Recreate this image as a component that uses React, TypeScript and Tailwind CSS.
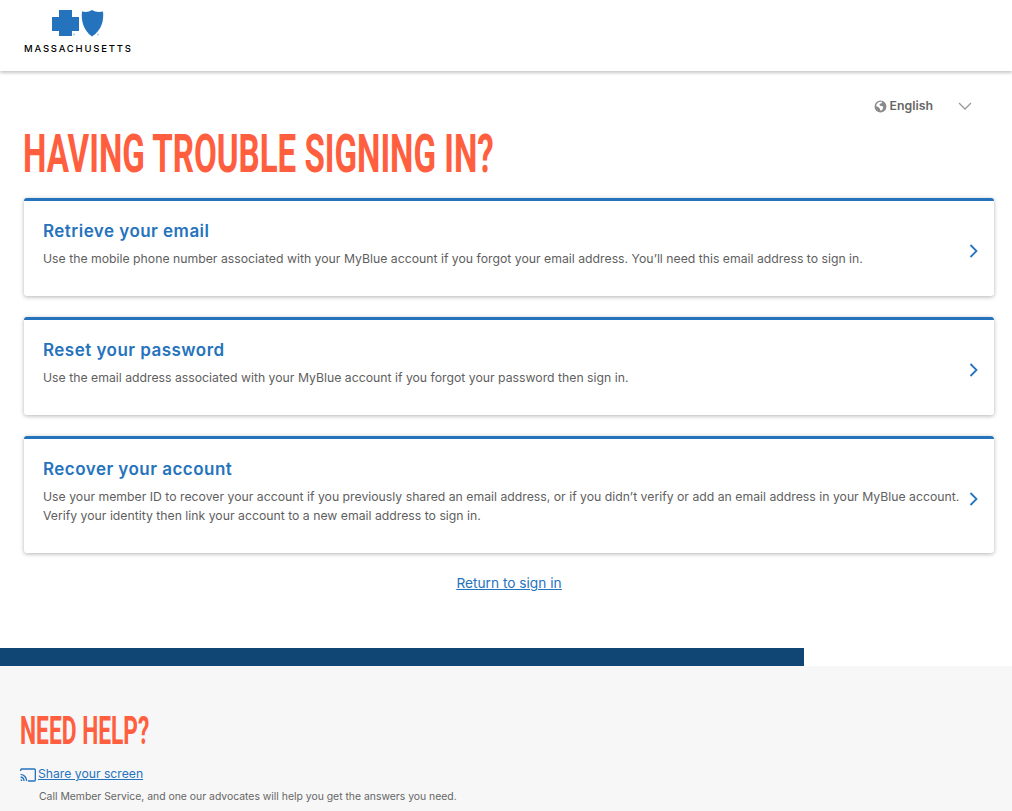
import React from "react";

const cards = [
  { t: "Retrieve your email", d: ["Use the mobile phone number associated with your MyBlue account if you forgot your email address. You’ll need this email address to sign in."], h: "h-[98px]" },
  { t: "Reset your password", d: ["Use the email address associated with your MyBlue account if you forgot your password then sign in."], h: "h-[98px]" },
  { t: "Recover your account", d: ["Use your member ID to recover your account if you previously shared an email address, or if you didn’t verify or add an email address in your MyBlue account.", "Verify your identity then link your account to a new email address to sign in."], h: "h-[117px]" },
];

function Logo() {
  return (
    <svg width="52" height="27" viewBox="0 0 52 27" className="block">
      <path d="M7 0H20V7H27V21H20V26H7V21H0V7H7Z" fill="#2673bd" />
      <circle cx="22" cy="24.500" r="1" fill="#a9c8e6" />
      <path d="M30 1.500C34 2.500 37 2 40 0C43 2 47 2.500 51 1.500C52 10 50 20 40 26.500C31 20 29 10 30 1.500Z" fill="#2673bd" />
      <circle cx="46" cy="24.500" r="1" fill="#a9c8e6" />
    </svg>
  );
}

export default function App() {
  return (
    <div className="h-[811px] overflow-hidden bg-white font-['Inter',sans-serif]">
      <header className="h-[71px] bg-white pl-6 pt-[10px] shadow-[0_2px_3px_rgba(0,0,0,0.22)]">
        <div className="ml-[28px]"><Logo /></div>
        <div className="mt-[6px] text-[9.5px] leading-[11px] font-medium tracking-[1.78px] text-black">MASSACHUSETTS</div>
      </header>

      <div className="flex h-[46px] items-center justify-end pr-[40px] pt-[24px] text-[#666]">
        <svg width="13" height="13" viewBox="0 0 24 24" className="mr-[3px]" fill="#8a8a8a">
          <path d="M12 1a11 11 0 1 0 0 22 11 11 0 0 0 0-22Zm0 2c1 0 2 .2 3 .6L14 6l-3 1-1 2 2 2 3 0 2 2-1 4-3 3h-1l-1-4-3-3-3-1-1-2c.6-3.600 4-7 8-7Z" />
        </svg>
        <span className="text-[12.3px] font-semibold">English</span>
        <svg width="14" height="8" viewBox="0 0 14 8" className="ml-[25px]" fill="none" stroke="#999" strokeWidth="1.3">
          <path d="M1 1l6 6 6-6" />
        </svg>
      </div>

      <h1 className="mt-[11px] ml-[23px] h-[52px] origin-left scale-x-[0.613] whitespace-nowrap font-['Roboto',sans-serif] text-[54px] leading-[52px] font-bold text-[#ff5f3f] uppercase">
        Having trouble signing in?
      </h1>

      <main className="mt-[18px] ml-[24px] flex w-[970px] flex-col gap-[21px]">
        {cards.map((c) => (
          <div key={c.t} className={`${c.h} flex items-center rounded-[3px] border-t-[3px] border-[#2673bd] bg-white pl-[19px] pr-[16px] shadow-[0_1px_4px_rgba(0,0,0,0.3)]`}>
            <div className="min-w-0 flex-1 self-start pt-[20px]">
              <div className="text-[17px] leading-[20px] font-semibold tracking-[0.47px] text-[#2673bd]">{c.t}</div>
              <div className="mt-[8px] text-[12.25px] leading-[19px] whitespace-nowrap text-[#5f5f5f]">
                {c.d.map((l) => <div key={l}>{l}</div>)}
              </div>
            </div>
            <svg width="9" height="14" viewBox="0 0 9 14" className="mt-[5px]" fill="none" stroke="#2673bd" strokeWidth="1.8"><path d="M1.500 1l6 6-6 6" /></svg>
          </div>
        ))}
      </main>

      <div className="mt-[20px] pl-[6px] text-center text-[13.7px] leading-[20px] text-[#2673bd] underline">
        <a href="#">Return to sign in</a>
      </div>

      <div className="mt-[55px] h-[18px] w-[804px] bg-[#0f4674]" />
      <footer className="h-[145px] bg-[#f7f7f7] pl-5 pt-[45px]">
        <h2 className="h-[40px] origin-left scale-x-[0.584] whitespace-nowrap font-['Roboto',sans-serif] text-[39px] leading-[40px] font-bold text-[#ff5f3f] uppercase">Need help?</h2>
        <div className="mt-[14px] flex items-center text-[#2673bd]">
          <svg width="16" height="14" viewBox="0 0 24 20" className="mt-[2px] mr-[2px]" fill="none" stroke="#2673bd" strokeWidth="2">
            <path d="M1 4V2.500A1.500 1.500 0 0 1 2.500 1h19A1.500 1.500 0 0 1 23 2.500v15a1.500 1.500 0 0 1-1.500 1.500H12" />
            <path d="M1 9a10 10 0 0 1 9 10M1 13a6 6 0 0 1 5 6M1 17a2 2 0 0 1 1.500 2" />
          </svg>
          <a href="#" className="text-[12.2px] leading-[17px] underline">Share your screen</a>
        </div>
        <div className="mt-[8px] ml-[19px] text-[10.4px] leading-[14px] text-[#666]">Call Member Service, and one our advocates will help you get the answers you need.</div>
      </footer>
    </div>
  );
}
